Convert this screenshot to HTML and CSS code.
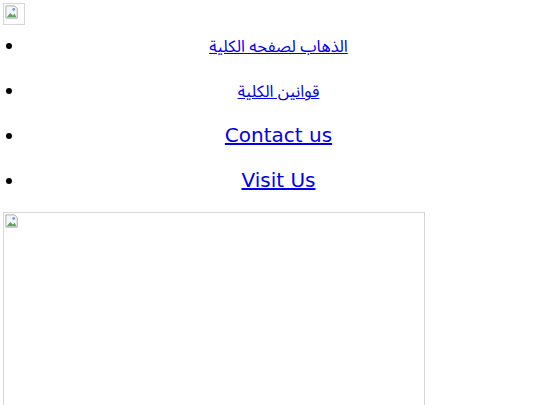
FILE: index.html
```html
<!DOCTYPE html>
<html lang="ar">
<head>
<meta charset="utf-8">
<title>الكلية</title>
<link rel="stylesheet" href="styles.css">
</head>
<body>
<div class="logo broken">
  <svg class="broken-icon" viewBox="0 0 16 16" width="16" height="16" aria-hidden="true">
    <path d="M1 1h10l3 3v11H1z" fill="#f4f6f8" stroke="#9aa4ae" stroke-width="1"/>
    <path d="M2 14l4-5 3 3 2-2 2 4z" fill="#5aa55a"/>
    <circle cx="10" cy="5" r="1.6" fill="#6b9fd6"/>
  </svg>
</div>
<ul class="nav">
  <li><a href="#" class="ar" dir="rtl">الذهاب لصفحه الكلية</a></li>
  <li><a href="#" class="ar" dir="rtl">قوانين الكلية</a></li>
  <li><a href="#">Contact us</a></li>
  <li><a href="#">Visit Us</a></li>
</ul>
<div class="banner broken">
  <svg class="broken-icon" viewBox="0 0 16 16" width="16" height="16" aria-hidden="true">
    <path d="M1 1h10l3 3v11H1z" fill="#f4f6f8" stroke="#9aa4ae" stroke-width="1"/>
    <path d="M2 14l4-5 3 3 2-2 2 4z" fill="#5aa55a"/>
    <circle cx="10" cy="5" r="1.6" fill="#6b9fd6"/>
  </svg>
</div>
</body>
</html>
```
FILE: styles.css
```css
html, body {
  background: #ffffff;
}
body {
  margin: 3px;
  font-family: "DejaVu Sans", sans-serif;
  color: #000000;
}
.broken {
  box-sizing: border-box;
  border: 1px solid #d6d6d6;
}
.broken-icon {
  display: block;
  margin: 1px 0 0 1px;
  width: 14px;
  height: 14px;
}
.logo {
  width: 22px;
  height: 22px;
}
.nav {
  margin: 9px 0 0 0;
  padding: 0 5px 0 22px;
  list-style: disc outside;
  font-size: 20px;
  line-height: 23px;
}
.nav li {
  text-align: center;
  margin-bottom: 22px;
}
.nav li:last-child {
  margin-bottom: 20px;
}
.nav a {
  color: #0000ee;
  text-decoration: underline;
}
.nav a.ar {
  font-family: "Noto Sans Arabic", "DejaVu Sans", sans-serif;
  font-size: 16.5px;
  line-height: 16px;
}
.banner {
  width: 422px;
  height: 260px;
}
```
